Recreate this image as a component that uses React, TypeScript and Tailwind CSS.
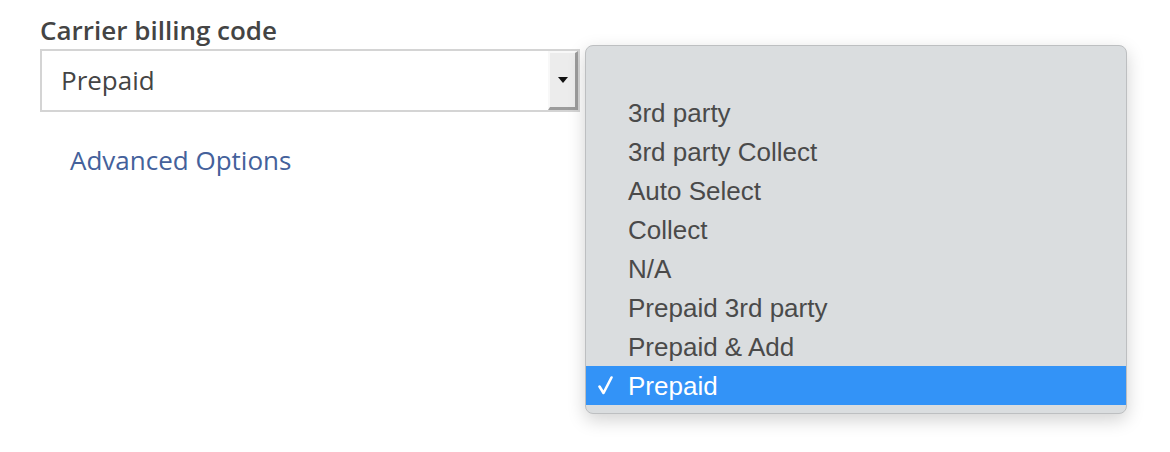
const options = [
  "",
  "3rd party",
  "3rd party Collect",
  "Auto Select",
  "Collect",
  "N/A",
  "Prepaid 3rd party",
  "Prepaid & Add",
  "Prepaid",
];

const selected = "Prepaid";

export default function App() {
  return (
    <div className="w-[1170px] h-[452px] bg-white flex items-start gap-[5px] pl-10 pt-[14px] font-['Open_Sans',sans-serif]">
      <div className="w-[540px] flex flex-col">
        <label className="text-[26px] leading-[33px] font-semibold text-[#444]">
          Carrier billing code
        </label>
        <div className="mt-[2px] h-[63px] flex border-2 border-[#d4d4d4] bg-white">
          <div className="flex-1 flex items-center pl-[19px] text-[26px] text-[#444]">
            Prepaid
          </div>
          <div className="w-[30px] flex items-center justify-center bg-[#ececec] border-t-2 border-l-2 border-t-[#f8f8f8] border-l-[#f8f8f8] border-r-[3px] border-b-[3px] border-r-[#9c9c9c] border-b-[#9c9c9c]">
            <svg width="10" height="6" viewBox="0 0 10 6">
              <path d="M0 0h10L5 6z" fill="#111" />
            </svg>
          </div>
        </div>
        <a className="mt-[32px] ml-[30px] text-[26px] leading-[33px] text-[#44619b]">
          Advanced Options
        </a>
      </div>
      <ul className="mt-[31px] w-[542px] py-2 rounded-lg bg-[#dadddf] border border-[#bdbfc1] shadow-[0_6px_18px_rgba(0,0,0,0.18)] font-['Liberation_Sans',Arial,sans-serif] text-[26px]">
        {options.map((o, i) => {
          const active = o === selected;
          return (
            <li
              key={i}
              className={
                active
                  ? "relative h-[39px] flex items-center pl-[42px] pt-px bg-[#3393f7] text-white"
                  : "relative h-[39px] flex items-center pl-[42px] pt-px text-[#4a4a4a]"
              }
            >
              {active && (
                <svg
                  className="absolute left-[12px] top-[10px]"
                  width="15"
                  height="19"
                  viewBox="0 0 15 19"
                >
                  <path
                    d="M1.5 10.5 L5.5 17 L13.5 1.5"
                    fill="none"
                    stroke="white"
                    strokeWidth="2.6"
                    strokeLinecap="round"
                    strokeLinejoin="round"
                  />
                </svg>
              )}
              {o}
            </li>
          );
        })}
      </ul>
    </div>
  );
}
